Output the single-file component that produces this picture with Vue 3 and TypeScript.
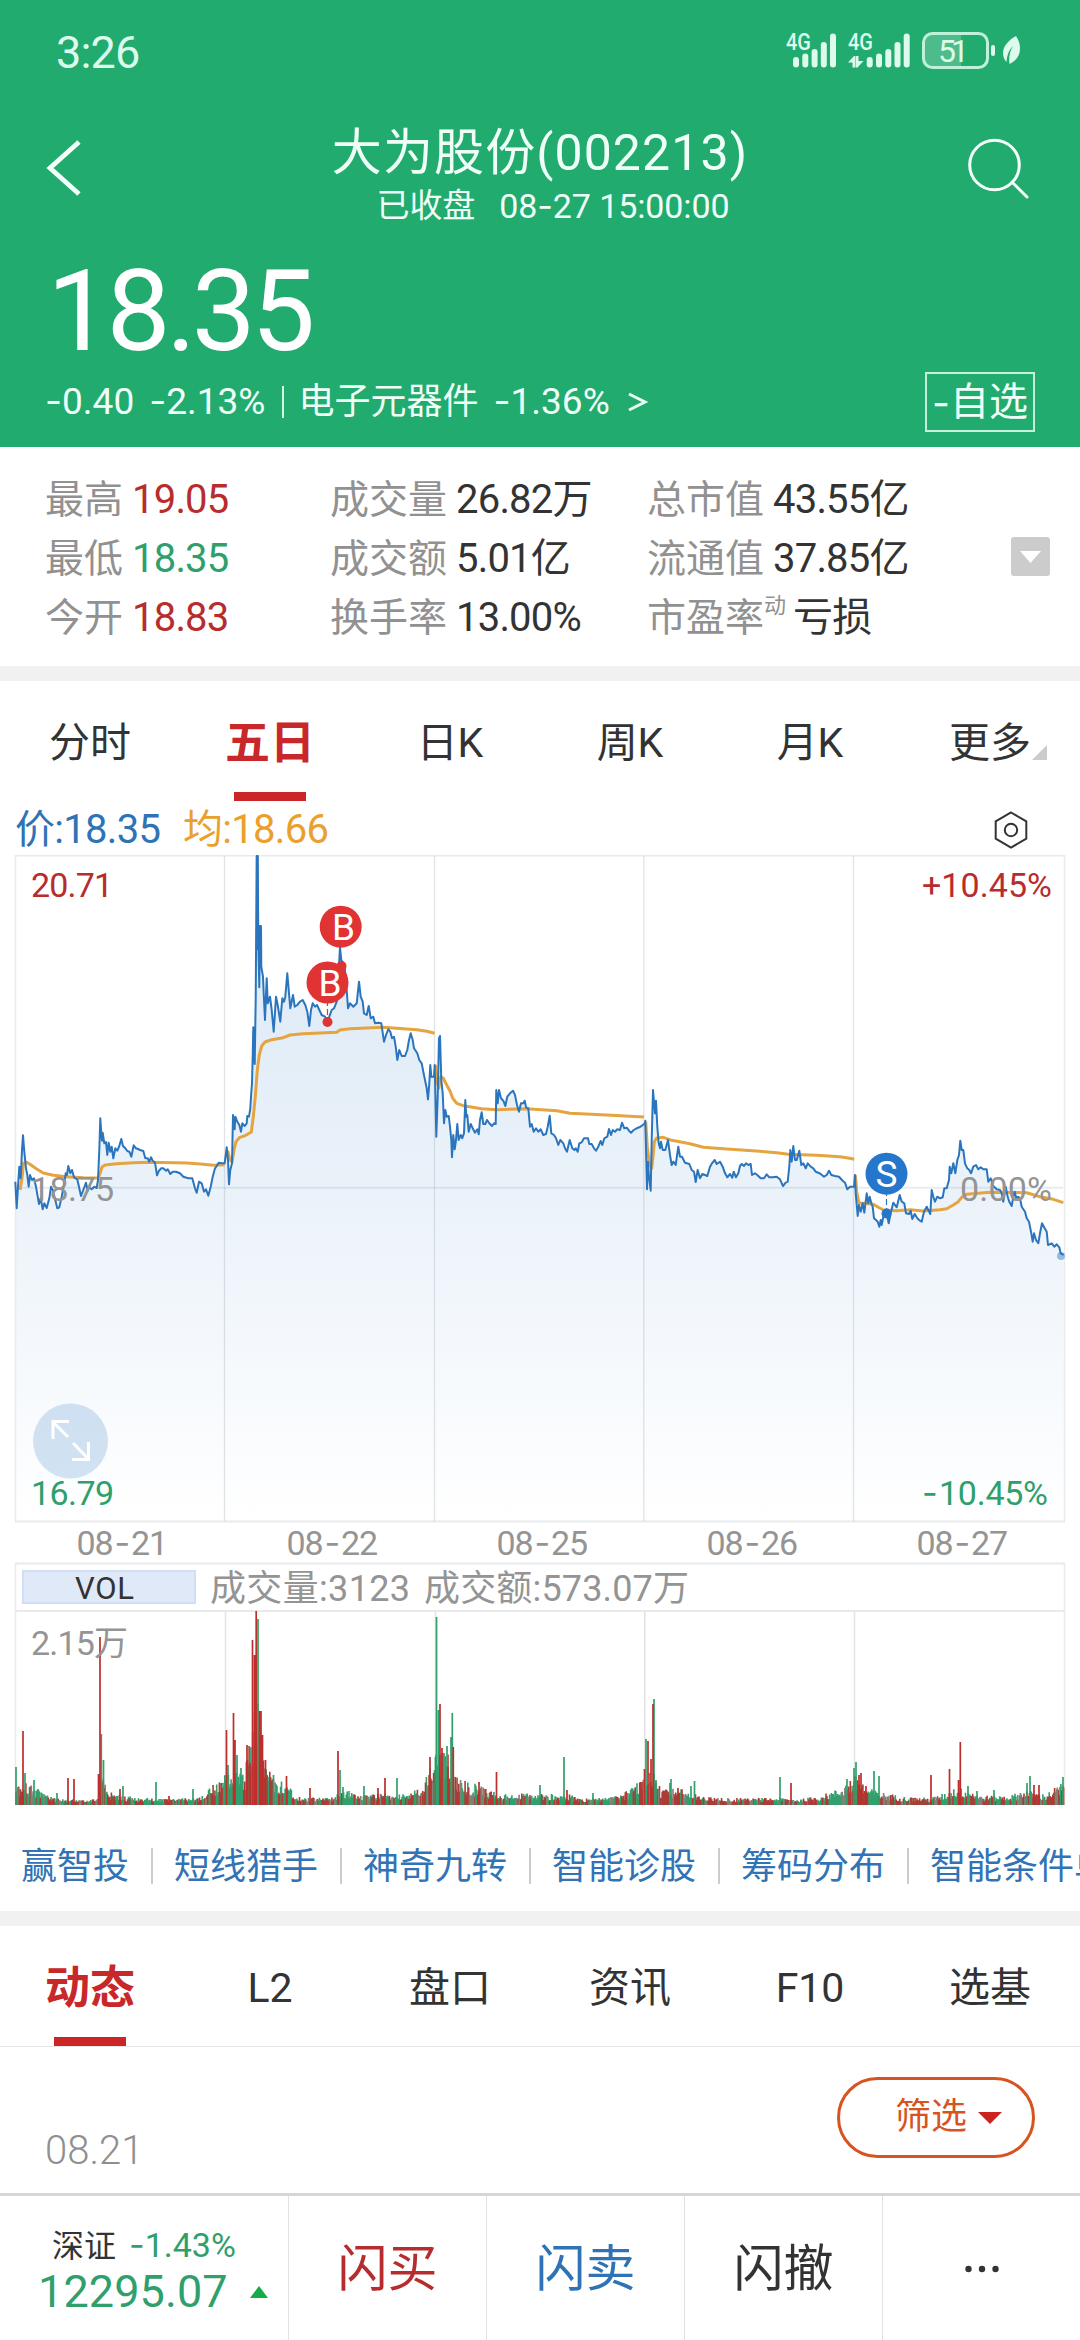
<script setup lang="ts">
interface Stat { label: string; sup?: string; value: string; tone?: string }

const stats: Stat[][] = [
  [
    { label: '最高', value: '19.05', tone: 'up' },
    { label: '最低', value: '18.35', tone: 'down' },
    { label: '今开', value: '18.83', tone: 'up' },
  ],
  [
    { label: '成交量', value: '26.82万' },
    { label: '成交额', value: '5.01亿' },
    { label: '换手率', value: '13.00%' },
  ],
  [
    { label: '总市值', value: '43.55亿' },
    { label: '流通值', value: '37.85亿' },
    { label: '市盈率', sup: '动', value: '亏损' },
  ],
]
const periods = ['分时', '五日', '日K', '周K', '月K', '更多']
const sections = ['动态', 'L2', '盘口', '资讯', 'F10', '选基']
const tools = ['赢智投', '短线猎手', '神奇九转', '智能诊股', '筹码分布', '智能条件单']
const days = ['21', '22', '25', '26', '27']
const dividers = [224.5, 434.5, 643.8, 853.5]

/* Samples are stored in thirds of a pixel, relative to an origin. */
type Pt = [number, number]
function trace(ox: number, oy: number, raw: string): Pt[] {
  return raw.trim().split(/\s+/).map((p) => {
    const [x, y] = p.split(',').map(Number)
    return [+(ox + x / 3).toFixed(1), +(oy + y / 3).toFixed(1)] as Pt
  })
}
const line = (pts: Pt[]) => 'M' + pts.map((p) => p.join(' ')).join('L')

const price: Pt[] = [
  ...trace(0, 850, `46,995 50,1075 54,1010 58,950 62,985 66,900 69,856 73,905 78,955 82,975 86,1010 90,975 96,990 102,985 108,1010 113,1040 117,1062 122,1045 128,1078 133,1060 140,1074 148,1045 153,1010 158,1020 166,1050 172,1075 178,1072 185,1040 193,1000 197,970 201,975 205,948 211,970 216,960 222,982 232,988 243,1038 250,1020 258,998 263,1022 268,1012 275,1018 283,1010 290,1014 294,990 298,900 301,805 304,850 306,872 308,848 313,880 318,876 322,915 326,878 331,905 335,890 340,925 346,895 352,902 358,888 364,867 369,888 376,895 382,903 388,905 394,920 401,886 408,895 414,897 420,900 430,903 436,925 443,925 448,935 453,922 458,932 465,938 471,976 477,962 484,955 490,955 498,962 503,958 511,972 518,965 528,965 540,970 550,980 565,985 577,985 585,1015 590,1028 597,995 605,1000 612,1025 618,1018 625,1037 632,1010 638,980 645,955 650,948 656,938 665,940 674,940`),
  ...trace(210, 850, `45,932 50,892 54,930 57,1003 61,960 66,940 69,795 74,838 76,800 82,815 88,825 93,845 97,820 104,828 110,820 112,798 117,800 121,775 123,740 126,700 128,620 130,532 134,642 137,450 140,18 143,18 145,270 148,412 150,228 153,228 154,350 159,380 161,430 165,510 170,385 173,460 180,440 185,480 191,545 198,440 203,465 211,515 217,445 222,455 226,440 232,370 237,430 241,475 249,435 254,470 262,465 270,455 278,450 286,465 292,485 298,528 303,480 308,460 315,470 321,465 328,480 335,495 345,500 352,512 358,500 365,480 372,475 380,455 384,400 388,330 390,292 394,330 404,350 410,420 414,475 420,460 430,470 440,460 447,395 452,440 458,455 462,490 470,495 476,468 482,505 490,500 495,520 505,518 514,520 522,575 528,555 535,538 541,545 546,565 552,560 557,590 562,630 568,600 575,618 585,618 592,600 597,570 602,550 608,570 612,595 622,610 628,630 635,640 640,665 645,690 650,715 654,748 658,700 661,645 664,680 672,680`),
  ...trace(420, 980, `44,255 49,470 53,350 57,175 60,168 64,300 68,340 72,430 76,390 80,410 86,408 90,440 94,480 96,532 100,465 104,508 108,480 112,432 116,480 122,465 127,475 132,460 136,360 139,410 142,405 146,455 152,432 158,445 165,458 172,448 176,463 180,420 185,397 190,432 196,432 201,420 208,430 216,438 222,430 227,432 229,330 233,370 237,330 243,355 250,362 256,378 262,350 270,340 279,332 285,345 291,375 297,395 303,370 310,370 314,362 318,382 325,385 330,440 335,432 341,455 348,445 355,455 362,448 370,465 378,462 383,440 389,407 394,460 402,465 408,475 415,495 421,480 430,490 435,505 441,515 449,480 457,505 463,510 467,505 473,515 478,490 485,487 492,475 504,475 508,492 515,492 522,505 528,512 535,500 542,483 547,495 553,475 562,470 567,447 573,465 578,450 585,455 592,448 600,450 606,428 613,445 620,443 627,452 633,458 641,450 650,445 658,442 667,436 675,430 676,422 679,540 681,628 684,545 687,590 692,632 695,480 699,330 705,400 708,362 712,440 716,490 720,505 723,485 728,510 736,510 744,480 750,525 755,555 760,545 767,555 775,500 780,530 786,530 795,548 808,552 815,570 822,575 827,606 833,570 840,595 847,582 855,585 862,588 870,560 876,550 884,540 890,552 900,545 908,560 915,580 922,592 930,582 937,593 941,575 948,592 955,580`),
  ...trace(740, 1060, `0,318 5,312 12,318 18,310 25,315 32,312 36,345 45,340 52,345 62,355 72,355 80,343 88,352 98,352 110,350 120,358 129,378 137,368 143,365 148,320 151,270 155,305 160,258 165,300 170,300 178,272 184,315 190,310 197,325 203,310 212,320 220,325 227,335 235,338 242,342 252,350 260,345 267,332 274,345 285,348 297,350 308,362 315,368 322,388 330,380 342,380 345,345 347,400 353,468 357,435 362,455 368,430 373,458 380,400 385,430 389,410 394,430 398,440 402,475 408,480 413,485 418,500 422,480 425,495 430,470 440,460 446,490 452,460 460,428 465,435 470,442 479,405 485,425 493,430 498,460 507,462 512,452 517,477 524,462 532,475 540,482 545,485 552,455 560,440 565,450 571,462 575,390 580,410 585,425 592,410 600,415 608,412 613,385 620,385 627,360 629,320 634,340 640,310 646,340 652,300 657,285 661,242 665,270 670,270 675,310 682,325 688,330 693,340 700,320 708,315 715,328 722,322 730,328 740,328 745,365 752,355 760,378 770,388 780,390 785,400 790,425 797,380 803,410 808,425 815,438 820,410 824,395 829,415 834,410 840,415 845,440 855,455 860,475 867,485 873,515 878,545 882,520 888,540 895,550 900,520 906,490 914,505 920,515 924,555 935,550 943,560 950,553 958,562 962,580 971,585`),
]
const pricePath = line(price)
const areaPath = pricePath + `L${price[price.length - 1][0]} 1521L${price[0][0]} 1521Z`

const averages = [
  line(trace(0, 850, '60,1020 66,985 70,940 78,936 90,943 110,957 130,969 160,976 200,980 250,983 295,984 302,965 306,951 315,945 350,941 400,938 450,937 560,939 610,943 640,946 674,944')),
  line(trace(210, 850, '48,922 54,905 60,930 66,936 72,900 78,875 88,863 105,857 124,846 130,800 136,740 142,660 148,615 155,588 165,576 185,569 220,563 240,555 280,551 380,547 390,540 420,536 520,532 620,539 650,544 674,550')),
  line(trace(420, 980, '46,255 50,300 56,325 62,290 70,295 80,315 90,333 98,355 110,370 130,377 185,386 230,389 320,386 410,392 450,400 560,405 672,411')),
  line([
    ...trace(420, 980, '677,425 682,500 688,550 695,565 700,520 703,485 710,474 730,472 755,481 810,491 850,502 920,507 1020,514'),
    ...trace(740, 1060, '110,278 145,283 230,286 300,290 325,294 343,298'),
  ]),
  line(trace(740, 1060, '346,345 350,395 357,430 375,430 400,433 415,442 430,450 470,452 510,449 550,453 600,449 620,446 640,435 655,425 665,412 680,403 750,397 860,398 880,404 900,410 940,418 970,428')),
]

/* Volume: a level curve for ordinary minutes plus the individual spikes. */
const level: Pt[] = [[15, 22], [30, 18], [45, 9], [60, 5], [90, 4], [98, 8], [101, 30], [108, 11], [125, 8], [145, 6], [170, 5], [200, 7], [215, 18], [225, 28], [245, 28], [250, 60], [258, 90], [265, 34], [275, 22], [288, 20], [295, 7], [330, 6], [345, 13], [360, 8], [385, 11], [410, 9], [425, 22], [435, 45], [448, 45], [455, 27], [465, 21], [480, 16], [500, 9], [540, 10], [555, 9], [570, 9], [580, 5], [620, 8], [640, 20], [652, 32], [660, 15], [680, 14], [700, 8], [720, 6], [780, 6], [800, 5], [820, 8], [840, 14], [850, 22], [858, 26], [866, 15], [880, 11], [905, 7], [930, 6], [945, 10], [955, 15], [970, 13], [980, 8], [1010, 8], [1025, 13], [1045, 9], [1064, 20]]
function levelAt(x: number): number {
  for (let i = 1; i < level.length; i++) {
    const [x0, a] = level[i - 1]
    const [x1, b] = level[i]
    if (x <= x1) return a + ((b - a) * (x - x0)) / (x1 - x0)
  }
  return 18
}
const spikes = '16,38g 23,74r 25,32g 34,25g 38,16g 57,12g 68,27r 74,26r 98.5,31r 100,168r 101.3,71g 103.5,45g 120,16r 123,19g 156,23g 169,9r 193,16g 226.5,75r 228,40g 233.5,92r 235,65r 237,50g 241,37g 247,60r 250,42r 252.5,165r 254.5,150r 255.5,128r 256.2,194r 258,186g 259.5,94r 261,94r 262.5,70r 265.5,45r 273.5,30g 286.5,29r 310,17r 338,54r 340,35g 343,18g 364,19g 378,17r 385,27r 397,27g 430,48r 436.5,188g 438.5,95g 440,101r 442,57r 444,52g 447,59g 448,38r 451,68g 452.3,92g 453.3,58r 479,23r 496.5,33r 540,20g 564,48g 567,15r 593,12g 642,23r 644.5,36r 646,66g 648,64r 651,46r 653,101r 654,106g 656,25g 670,22g 671,26g 678,17r 691,19g 694.5,24g 780,28g 791,22r 847,26g 854,37g 856,43g 859,30r 861,32r 866,19r 874,34g 879,29g 931,30r 949.5,36r 958.5,25r 960.3,63r 968,19g 977,14g 994,15g 1027,22g 1030,29g 1034,20r 1039,20r 1063,28g'
  .split(' ').map((s) => {
    const [x, rest] = s.split(',')
    return { x: +x, h: parseFloat(rest), c: rest.slice(-1) }
  })
const volume: Record<string, string> = { r: '', g: '', n: '' }
let seed = 20240827
const rand = () => ((seed = (seed * 1103515245 + 12345) % 2147483648) / 2147483648)
let tone = 'g'
for (let x = 16; x < 1064; x += 0.9) {
  const q = rand()
  const h = Math.max(3, levelAt(x) * (0.45 + 0.75 * rand()))
  if (q < 0.3) tone = 'r'
  else if (q < 0.62) tone = 'g'
  else if (q < 0.7) tone = 'n'
  volume[tone] += `M${x.toFixed(1)} 1805v-${h.toFixed(1)}`
}
const spikePath = (c: string) => spikes.filter((s) => s.c === c).map((s) => `M${s.x} 1805v-${s.h}`).join('')
</script>

<template>
  <div class="page">
    <header class="head">
      <div class="status">
        <span class="clock">3:26</span>
        <svg class="signals" width="240" height="44" viewBox="784 30 240 44">
          <g fill="#dcfbec">
            <text x="786" y="50" font-size="23" font-weight="500" textLength="25" lengthAdjust="spacingAndGlyphs">4G</text>
            <text x="848" y="50" font-size="23" font-weight="500" textLength="25" lengthAdjust="spacingAndGlyphs">4G</text>
            <g v-for="o in [0, 73.7]" :key="o" :transform="`translate(${o} 0)`">
              <rect x="793" y="57" width="6" height="10.5" rx="3" />
              <rect x="802.3" y="53.5" width="6" height="14" rx="3" />
              <rect x="811.6" y="49" width="6" height="18.5" rx="3" />
              <rect x="820.8" y="42" width="6" height="25.5" rx="3" />
              <rect x="830" y="33.5" width="6" height="34" rx="3" />
            </g>
            <path d="M848 62.500l6-6.500h1.500v11.500H852.500v-5zM863.500 61l-6 6.500H856V56h2.500v5z" />
            <rect x="991" y="45" width="4" height="11" rx="2" />
            <path d="M1016 36C1009 40 1003 46 1003 53C1003 57 1004.500 60 1006.500 62C1007 55 1009 50 1013 46C1010 51 1008.500 57 1009.500 64C1016 61 1020 56 1020 48C1020 43 1018 39 1016 36Z" />
          </g>
          <path d="M961 34H932a8 8 0 0 0-8 8v17a8 8 0 0 0 8 8h29z" fill="#fff" fill-opacity=".2" />
          <rect x="923.500" y="33.500" width="64" height="34" rx="9" fill="none" stroke="#bff0d9" stroke-width="3" />
          <text x="938" y="62" font-size="32" fill="#dcfbec" textLength="31">51</text>
        </svg>
      </div>
      <div class="titlebar">
        <svg width="77" height="60" viewBox="0 0 77 60"><path d="M42 4L13 30L42 56" fill="none" stroke="#f4fffa" stroke-width="4.800" /></svg>
        <div class="titles">
          <h1>大为股份(002213)</h1>
          <p><span>已收盘</span><span>08<i>-</i>27 15:00:00</span></p>
        </div>
        <svg width="64" height="64" viewBox="965 136 64 64"><g fill="none" stroke="#f4fffa" stroke-width="3"><circle cx="993.500" cy="165" r="24.800" /><path d="M1011 182L1026 197" stroke-linecap="round" /></g></svg>
      </div>
      <div class="price">18.35</div>
      <div class="change">
        <span class="c1"><i>-</i>0.40</span>
        <span class="c2"><i>-</i>2.13%</span>
        <span class="bar" />
        <span class="c3">电子元器件</span>
        <span class="c4"><i>-</i>1.36%</span>
        <svg width="22" height="22" viewBox="0 0 22 22"><path d="M2 3L18 11L2 19" fill="none" stroke="#e8fff4" stroke-width="3" /></svg>
        <button class="fav"><i>-</i>自选</button>
      </div>
    </header>

    <section class="stats">
      <div v-for="(col, i) in stats" :key="i" class="col">
        <div v-for="s in col" :key="s.label" class="stat">
          <span class="label">{{ s.label }}<sup v-if="s.sup">{{ s.sup }}</sup></span>
          <span class="value" :class="s.tone">{{ s.value }}</span>
        </div>
      </div>
      <div class="expand"><svg width="21" height="12" viewBox="0 0 21 12"><path d="M0 0H21L10.500 12Z" fill="#fff" /></svg></div>
    </section>

    <nav class="tabs periods">
      <div v-for="(t, i) in periods" :key="t" class="tab" :class="{ on: i === 1 }">
        <span>{{ t }}</span>
        <svg v-if="i === 5" class="corner" width="15" height="15" viewBox="0 0 15 15"><path d="M15 0V15H0Z" fill="#ccc" /></svg>
      </div>
    </nav>

    <div class="legend">
      <span class="now">价:18.35</span>
      <span class="avg">均:18.66</span>
      <svg width="36" height="40" viewBox="993 810 36 40"><g fill="none" stroke="#333" stroke-width="2"><path d="M1011 812.500L1026.300 821.300V838.700L1011 847.500L995.700 838.700V821.300Z" /><circle cx="1011" cy="830" r="6.200" /></g></svg>
    </div>

    <svg class="chart" width="1080" height="955" viewBox="0 855 1080 955">
      <defs>
        <linearGradient id="area" gradientUnits="userSpaceOnUse" x1="0" y1="855" x2="0" y2="1521">
          <stop offset="0" stop-color="#2676c4" stop-opacity=".17" />
          <stop offset="0.5" stop-color="#2676c4" stop-opacity=".095" />
          <stop offset="1" stop-color="#2676c4" stop-opacity="0" />
        </linearGradient>
      </defs>
      <path :d="areaPath" fill="url(#area)" />
      <g fill="none" stroke="#e8eaec" stroke-width="1.500">
        <path d="M15.500 1521V855.800H1064.500V1521M15.500 1805V1563M1064.500 1563V1805" />
        <path d="M15 1521.500H1065M15 1563.500H1065M15 1611H1065" stroke-width="2" />
        <path d="M15 1187.700H1063" stroke="#8aa0b8" stroke-opacity=".2" stroke-width="2" />
        <path v-for="x in dividers" :key="x" :d="`M${x} 856V1521`" stroke="#a0acb8" stroke-opacity=".32" stroke-width="1.300" />
        <path v-for="x in dividers" :key="-x" :d="`M${x + 1} 1611V1805`" stroke="#e2e2e2" />
      </g>
      <g fill="none" stroke-linejoin="round">
        <path v-for="(d, i) in averages" :key="i" :d="d" stroke="#e5a440" stroke-width="3" />
        <path :d="pricePath" stroke="#2a75bd" stroke-width="2" />
        <path d="M257.200 856V950" stroke="#2a75bd" stroke-width="2.500" />
      </g>
      <circle cx="1061" cy="1256" r="4" fill="#2676c4" fill-opacity=".45" />
      <g stroke-width="1.200" stroke-dasharray="6 3">
        <path d="M327.500 1000V1018" stroke="#e03434" />
        <path d="M886.500 1190V1210" stroke="#2676c4" />
      </g>
      <g fill="#e03333">
        <circle cx="341.500" cy="966" r="5" />
        <circle cx="340.700" cy="926.700" r="21" />
        <circle cx="327.500" cy="982.500" r="21" />
        <circle cx="327.500" cy="1022" r="5" />
      </g>
      <g fill="#2676cc"><circle cx="886.500" cy="1173.700" r="21" /><circle cx="886.500" cy="1213.500" r="5" /></g>
      <g class="mark"><text x="343.500" y="939.700">B</text><text x="330" y="995.500">B</text><text x="886.500" y="1187">S</text></g>
      <g class="axis">
        <text x="31" y="897" fill="#b72c2c" textLength="82">20.71</text>
        <text x="31" y="1201" fill="#949494" textLength="83">18.75</text>
        <text x="960" y="1201" fill="#949494" textLength="92">0.00%</text>
        <text x="922" y="897" fill="#b72c2c" textLength="130">+10.45%</text>
        <text x="31" y="1505" fill="#2f9f6c" textLength="83">16.79</text>
        <text x="939" y="1505" fill="#2f9f6c" textLength="109">10.45%</text>
        <text x="922" y="1505" fill="#2f9f6c" class="dash">-</text>
      </g>
      <circle cx="70.500" cy="1441" r="37.500" fill="#2676c4" fill-opacity=".2" />
      <path d="M53 1439V1421.500H69M53 1422L68 1437M72 1459.500H88.500V1442M73 1443L88 1458.500" fill="none" stroke="#fff" stroke-width="3" />
      <g class="days">
        <g v-for="(d, i) in days" :key="d" :transform="`translate(${76.500 + i * 210} 1555)`">
          <text x="0" y="0" textLength="37">08</text><text x="38" y="0" class="dash">-</text><text x="54.500" y="0" textLength="37">{{ d }}</text>
        </g>
      </g>
      <rect x="23" y="1571" width="172" height="32" fill="#dfe9f7" stroke="#d2def6" stroke-width="2" />
      <text x="75" y="1599" font-size="31" fill="#333" textLength="59">VOL</text>
      <g class="vol">
        <text x="210" y="1601" textLength="200">成交量:3123</text>
        <text x="424" y="1601" textLength="265">成交额:573.07万</text>
      </g>
      <g fill="none" stroke-width="1.600">
        <path :d="volume.g" stroke="#32a06c" />
        <path :d="volume.r" stroke="#a93c34" />
        <path :d="volume.n" stroke="#7f8278" />
        <path :d="spikePath('g')" stroke="#32a06c" stroke-width="1.700" />
        <path :d="spikePath('r')" stroke="#bd2e2c" stroke-width="1.700" />
      </g>
      <text x="31" y="1655" font-size="34" fill="#949494" textLength="97">2.15万</text>
    </svg>

    <div class="tools">
      <template v-for="(t, i) in tools" :key="t">
        <span v-if="i" class="sep" />
        <span class="tool">{{ t }}</span>
      </template>
    </div>

    <nav class="tabs sections">
      <div v-for="(t, i) in sections" :key="t" class="tab" :class="{ on: i === 0 }"><span>{{ t }}</span></div>
    </nav>

    <section class="feed">
      <span class="date">08.21</span>
      <button class="filter">筛选<svg width="24" height="12" viewBox="0 0 24 12"><path d="M0 0H24L12 12Z" fill="#cb2420" /></svg></button>
    </section>

    <footer class="foot">
      <div class="index">
        <div class="row1"><span>深证</span><span class="pct"><i>-</i>1.43%</span></div>
        <div class="row2"><span>12295.07</span><svg width="18" height="12" viewBox="0 0 18 12"><path d="M0 12H18L9 0Z" fill="#13ac46" /></svg></div>
      </div>
      <div class="act buy">闪买</div>
      <div class="act sell">闪卖</div>
      <div class="act">闪撤</div>
      <div class="act"><svg width="36" height="8" viewBox="0 0 36 8" fill="#333"><circle cx="4.500" cy="4" r="3.200" /><circle cx="18" cy="4" r="3.200" /><circle cx="31.500" cy="4" r="3.200" /></svg></div>
    </footer>
  </div>
</template>

<style>
body { margin: 0; background: #fff; }
</style>

<style scoped>
.page { width: 1080px; height: 2340px; overflow: hidden; display: flex; flex-direction: column; background: #fff; color: #333; font-family: Roboto, "Noto Sans CJK SC", sans-serif; line-height: 1.2; box-sizing: border-box; }
.page * { box-sizing: border-box; }
i { font-family: Inter, sans-serif; font-style: normal; line-height: 1; }
button { font-family: inherit; line-height: 1.2; background: none; padding: 0; }
svg { display: block; flex: none; }

.head { height: 447px; flex: none; background: #22ab6f; color: #effff7; display: flex; flex-direction: column; }
.status { height: 104px; padding: 0 56px 0 56px; display: flex; justify-content: space-between; align-items: center; }
.clock { font-size: 45px; color: #dcfbec; letter-spacing: -.8px; padding-top: 2px; }
.titlebar { height: 128px; display: flex; justify-content: space-between; padding: 0 50px 0 37px; align-items: center; }
.titles { display: flex; flex-direction: column; align-items: center; padding-top: 14px; }
h1 { margin: 0; font-size: 50px; font-weight: 400; line-height: 60px; letter-spacing: 1.100px; }
.titles p { margin: 0; padding: 1px 0 0 26px; display: flex; gap: 24px; font-size: 34px; line-height: 44px; letter-spacing: -.1px; }
.titles p span:first-child { font-size: 33px; }
.price { height: 135px; padding-left: 47px; font-size: 114px; line-height: 158px; letter-spacing: -4.500px; color: #fff; }
.change { height: 80px; padding: 0 45px 11px; display: flex; align-items: center; font-size: 37px; line-height: 44px; }
.bar { width: 2px; height: 32px; background: #d5f7e6; margin: 0 14px 0 17px; }
.c2 { margin-left: 15px; }
.c3 { font-size: 36px; }
.c4 { margin: 0 17px 0 15px; }
.fav { margin-left: auto; width: 110px; height: 60px; border: 2px solid #c5f0dc; color: #effff7; font-size: 39px; display: flex; align-items: center; justify-content: center; white-space: nowrap; padding-top: 2px; }

.stats { height: 234px; flex: none; border-bottom: 15px solid #f1f1f1; display: flex; padding: 22px 30px 0 45px; }
.col { display: flex; flex-direction: column; }
.col:nth-child(1) { width: 285px; }
.col:nth-child(2) { width: 317px; }
.stat { height: 59px; display: flex; align-items: baseline; padding-top: 7px; gap: 9px; font-size: 40px; line-height: 47px; letter-spacing: -.8px; white-space: nowrap; }
.label { font-size: 39px; letter-spacing: 0; color: #919191; }
.label sup { font-size: 22px; line-height: 22px; vertical-align: 18px; margin-right: -2px; }
.up { color: #b72c2c; }
.down { color: #2f9f6c; }
.expand { width: 39px; height: 39px; margin: 68px 0 0 auto; background: #ccc; border-radius: 3px; display: flex; align-items: center; justify-content: center; }

.tabs { display: flex; flex: none; height: 120px; }
.tab { width: 180px; height: 100%; display: flex; align-items: center; justify-content: center; font-size: 41px; position: relative; padding-top: 5px; }
.tab.on { color: #c8282a; font-weight: 700; font-size: 45px; }
.tab.on::after { content: ""; position: absolute; left: 54px; bottom: 0; width: 72px; height: 9px; background: #cc2527; }
.corner { position: absolute; right: 33px; bottom: 41px; }
.legend { height: 54px; flex: none; display: flex; align-items: center; padding: 3px 51px 0 15px; font-size: 40px; letter-spacing: -.7px; }
.now { color: #2f73b5; width: 168px; }
.avg { color: #e9a02c; }
.legend svg { margin-left: auto; }
.chart { font-family: Roboto, "Noto Sans CJK SC", sans-serif; }
.axis text { font-size: 34px; }
.days { fill: #949494; font-size: 34px; }
.axis .dash, .days .dash { font-family: Inter, sans-serif; }
.mark { fill: #fff; font-size: 37px; text-anchor: middle; }
.vol { fill: #949494; font-size: 36px; }

.tools { height: 116px; flex: none; display: flex; align-items: center; padding: 11px 0 0 21px; border-bottom: 15px solid #f1f1f1; font-size: 36px; color: #3173b4; white-space: nowrap; overflow: hidden; }
.sep { width: 2px; height: 36px; background: #ccc; margin: 0 21.500px; flex: none; }
.tool { flex: none; padding-top: 4px; }

.sections { height: 121px; border-bottom: 1px solid #e6e6e6; }
.feed { flex: none; height: 146px; display: flex; justify-content: space-between; padding: 30px 45px 0; }
.date { font-size: 40px; font-weight: 300; color: #8f8f8f; line-height: 46px; margin-top: 51px; }
.filter { width: 198px; height: 81px; border: 3px solid #d5541f; border-radius: 41px; color: #d5541f; font-size: 36px; display: flex; align-items: center; gap: 11px; padding: 0 0 0 55px; }

.foot { flex: 1; border-top: 3px solid #d6d6d6; display: flex; }
.index { width: 288px; padding: 26px 0 0 38px; color: #2f9f6c; }
.row1 { display: flex; gap: 13px; align-items: baseline; height: 48px; padding: 3px 0 0 14px; font-size: 34px; }
.row1 span:first-child { font-size: 32px; color: #333; }
.row2 { display: flex; align-items: center; gap: 22px; height: 43px; font-size: 45px; letter-spacing: .1px; }
.act { flex: 1; border-left: 1px solid #e2e2e2; display: flex; align-items: center; justify-content: center; font-size: 50px; padding-top: 1px; }
.buy { color: #b72c2c; }
.sell { color: #2f73b5; }
</style>
